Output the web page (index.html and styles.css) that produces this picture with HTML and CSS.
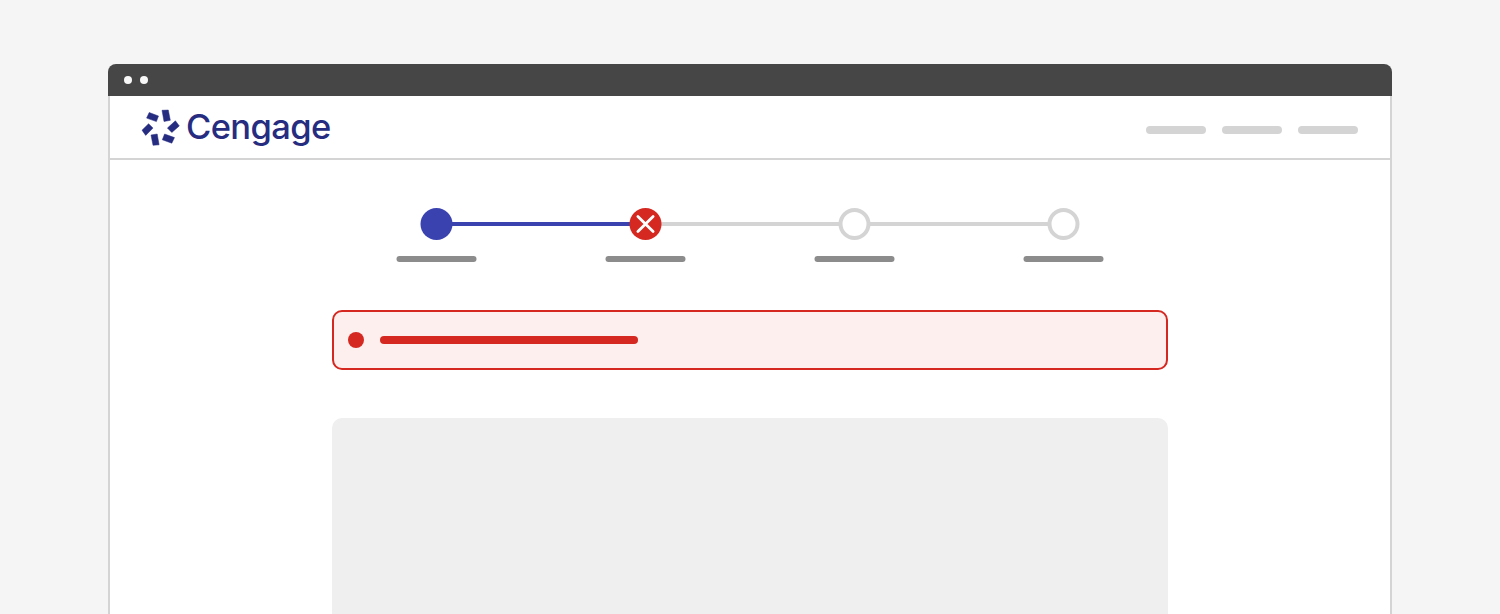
FILE: index.html
```html
<!DOCTYPE html>
<html lang="en">
<head>
<meta charset="utf-8">
<title>Cengage</title>
<link rel="stylesheet" href="styles.css">
</head>
<body>
<div class="window">
  <div class="titlebar"><span class="dot"></span><span class="dot"></span></div>
  <div class="page">
    <header class="header">
      <div class="brand">
        <svg class="mark" width="38" height="36" viewBox="0 0 38 36" aria-hidden="true">
          <path d="M20 .3L26.3 0 28.3 10.3 22 11.5zM7.2 2.5L16.5 6 14.4 11.6 4.6 8.1zM33.4 10.8L37.3 15.9 29.8 22.5 25.4 18zM6.6 13.7L11 18.1 3.7 25.4 0 20.2zM9 25L15.2 24 17.1 34.8 11 35.3zM22.6 24L32.5 27.6 29.8 33.2 20.3 29.8z"/>
        </svg>
        <span class="brand-name">Cengage</span>
      </div>
      <nav class="nav"><span></span><span></span><span></span></nav>
    </header>
    <main class="content">
      <ol class="steps">
        <li class="step step-done"><span class="marker"></span><span class="label"></span></li>
        <li class="step step-error">
          <span class="marker"><svg width="32" height="32" viewBox="0 0 32 32"><path d="M8.4 8.4L23.6 23.6M23.6 8.4L8.4 23.6"/></svg></span>
          <span class="label"></span>
        </li>
        <li class="step"><span class="marker"></span><span class="label"></span></li>
        <li class="step"><span class="marker"></span><span class="label"></span></li>
      </ol>
      <div class="alert"><span class="alert-icon"></span><span class="alert-text"></span></div>
      <div class="panel"></div>
    </main>
  </div>
</div>
</body>
</html>
```
FILE: styles.css
```css
* { box-sizing: border-box; }
html, body { height: 100%; }
body {
  margin: 0;
  padding: 64px 108px 0;
  background: #f5f5f5;
  overflow: hidden;
  font-family: Inter, "Liberation Sans", sans-serif;
}
.window { height: 100%; display: flex; flex-direction: column; }
.titlebar {
  height: 32px;
  flex: none;
  display: flex;
  align-items: center;
  gap: 8px;
  padding: 0 16px;
  background: #464646;
  border-radius: 8px 8px 0 0;
}
.dot { width: 8px; height: 8px; border-radius: 50%; background: #f8f8f8; }
.page {
  flex: 1;
  min-height: 0;
  display: flex;
  flex-direction: column;
  background: #fff;
  border: solid #d4d4d4;
  border-width: 0 2px;
}
.header {
  height: 64px;
  flex: none;
  display: flex;
  justify-content: space-between;
  padding: 0 32px;
  border-bottom: 2px solid #d4d4d4;
}
.brand { display: flex; gap: 6px; padding-top: 14px; }
.mark { flex: none; fill: #262c80; stroke: #262c80; stroke-width: 0.5; overflow: visible; }
.brand-name {
  font-size: 34.5px;
  font-weight: 500;
  line-height: 34px;
  letter-spacing: -0.6px;
  color: #262c80;
}
.nav { display: flex; gap: 16px; padding-top: 30px; }
.nav span { width: 60px; height: 8px; border-radius: 4px; background: #d4d4d4; }
.content {
  flex: 1;
  min-height: 0;
  width: 836px;
  margin: 0 auto;
  padding-top: 48px;
  display: flex;
  flex-direction: column;
  gap: 48px;
}
.steps {
  list-style: none;
  margin: 0;
  padding: 0;
  display: grid;
  grid-template-columns: repeat(4, 1fr);
  transform: translateX(-0.5px);
}
.step { position: relative; display: flex; flex-direction: column; align-items: center; gap: 16px; }
.step + .step::before {
  content: "";
  position: absolute;
  top: 14px;
  right: calc(50% + 15px);
  width: 179px;
  height: 4px;
  background: #d4d4d4;
}
.step-done + .step::before { background: #3a42b0; }
.marker {
  position: relative;
  z-index: 1;
  width: 32px;
  height: 32px;
  border: 4px solid #d4d4d4;
  border-radius: 50%;
  background: #fff;
}
.step-done .marker { border: 0; background: #3a42b0; }
.step-error .marker { border: 0; background: #d42821; }
.marker svg { display: block; fill: none; stroke: #fff; stroke-width: 2.8; stroke-linecap: round; }
.label { width: 80px; height: 6px; border-radius: 3px; background: #8c8c8c; }
.alert {
  height: 60px;
  flex: none;
  display: flex;
  align-items: center;
  gap: 16px;
  padding: 0 14px;
  border: 2px solid #d42821;
  border-radius: 10px;
  background: #fdefee;
}
.alert-icon { width: 16px; height: 16px; border-radius: 50%; background: #d42821; }
.alert-text { width: 258px; height: 8px; border-radius: 4px; background: #d42821; }
.panel { flex: 1; background: #efefef; border-radius: 10px 10px 0 0; }
```
